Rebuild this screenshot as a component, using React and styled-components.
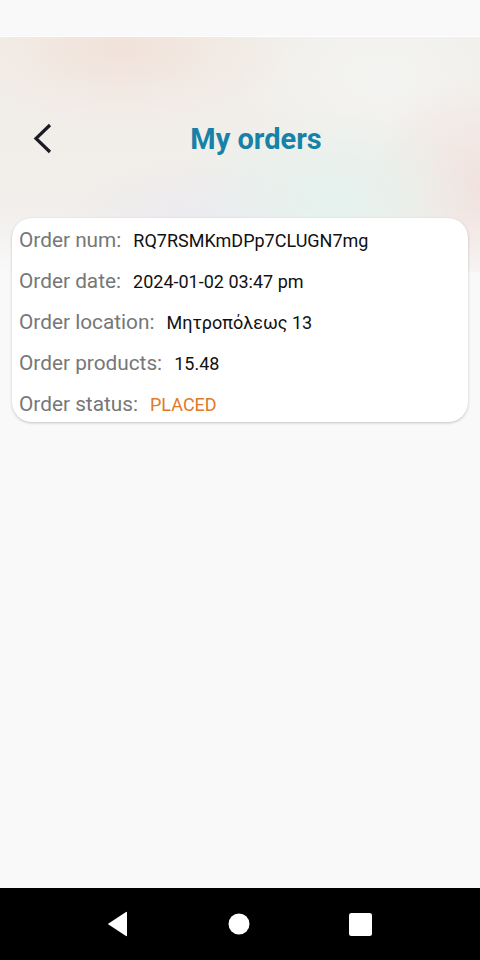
import React from "react";
import styled, { createGlobalStyle } from "styled-components";

const GlobalStyle = createGlobalStyle`
  html, body {
    margin: 0;
    padding: 0;
    background: #f9f9f9;
    font-family: Roboto, "Noto Sans", Arial, sans-serif;
  }
  #root {
    height: 960px;
  }
`;

const order = {
  num: "RQ7RSMKmDPp7CLUGN7mg",
  date: "2024-01-02 03:47 pm",
  location: "Μητροπόλεως 13",
  products: "15.48",
  status: "PLACED",
};

const App = () => {
  return (
    <>
      <GlobalStyle />
      <Screen>
        <StatusBar />
        <Content>
          <TopBar>
            <BackButton aria-label="back">
              <svg width="20" height="32" viewBox="0 0 20 32">
                <polyline
                  points="17,2 3,15.5 17,29"
                  fill="none"
                  stroke="#1b1b25"
                  strokeWidth="3.2"
                />
              </svg>
            </BackButton>
            <Title>My orders</Title>
          </TopBar>

          <Card>
            <Row>
              <Label>Order num:</Label>
              <Value>{order.num}</Value>
            </Row>
            <Row>
              <Label>Order date:</Label>
              <Value>{order.date}</Value>
            </Row>
            <Row>
              <Label>Order location:</Label>
              <Value>{order.location}</Value>
            </Row>
            <Row>
              <Label>Order products:</Label>
              <Value>{order.products}</Value>
            </Row>
            <Row>
              <Label>Order status:</Label>
              <Value status>{order.status}</Value>
            </Row>
          </Card>
        </Content>

        <NavBar>
          <svg width="22" height="26" viewBox="0 0 22 26">
            <path d="M20 1.5 L20 24.5 Q20 25.5 19 25 L1.5 13.5 Q0.8 13 1.5 12.5 L19 1 Q20 0.5 20 1.5 Z" fill="#fff" />
          </svg>
          <svg width="22" height="22" viewBox="0 0 22 22">
            <circle cx="11" cy="11" r="10.5" fill="#fff" />
          </svg>
          <svg width="23" height="23" viewBox="0 0 23 23">
            <rect x="0" y="0" width="23" height="23" rx="2.5" fill="#fff" />
          </svg>
        </NavBar>
      </Screen>
    </>
  );
};

export default App;

const Screen = styled.div`
  width: 480px;
  height: 960px;
  display: flex;
  flex-direction: column;
  background: #f9f9f9;
  overflow: hidden;
`;

const StatusBar = styled.div`
  height: 36px;
  flex-shrink: 0;
  background: #f9f9f9;
  border-bottom: 1px solid #ffffff;
`;

const Content = styled.div`
  flex: 1;
  display: flex;
  flex-direction: column;
  background-color: #f9f9f9;
  background-image:
    radial-gradient(ellipse 170px 80px at 120px 10px, rgba(242, 222, 212, 0.75), transparent),
    radial-gradient(ellipse 150px 90px at 330px 160px, rgba(228, 243, 238, 0.95), transparent),
    radial-gradient(ellipse 110px 110px at 480px 150px, rgba(242, 224, 220, 0.85), transparent),
    radial-gradient(ellipse 150px 70px at 210px 190px, rgba(234, 232, 240, 0.85), transparent),
    radial-gradient(ellipse 140px 90px at 380px 40px, rgba(243, 244, 242, 0.9), transparent),
    linear-gradient(180deg, #f1efea 0%, #f1eeeb 72%, #f9f9f9 100%);
  background-size: 100% 235px;
  background-repeat: no-repeat;
`;

const TopBar = styled.div`
  height: 40px;
  margin: 82px 0 59px;
  padding: 0 32px 0 24px;
  display: flex;
  align-items: center;
`;

const BackButton = styled.button`
  width: 40px;
  height: 40px;
  padding: 0 0 0 9px;
  border: none;
  background: none;
  display: flex;
  align-items: center;
  cursor: pointer;
`;

const Title = styled.h1`
  flex: 1;
  margin: 0;
  text-align: center;
  font-size: 29px;
  font-weight: 700;
  color: #1782a7;
  line-height: 40px;
`;

const Card = styled.div`
  margin: 0 12px;
  padding: 6px 7px 2px;
  background: #ffffff;
  border-radius: 20px;
  box-shadow: 0 1px 3px rgba(0, 0, 0, 0.22);
  display: flex;
  flex-direction: column;
  gap: 9px;
`;

const Row = styled.div`
  height: 32px;
  display: flex;
  align-items: center;
  gap: 12px;
`;

const Label = styled.span`
  font-size: 20.8px;
  color: #777777;
`;

const Value = styled.span`
  font-size: 18px;
  color: ${({ status }) => (status ? "#e07a27" : "#111111")};
`;

const NavBar = styled.div`
  height: 72px;
  flex-shrink: 0;
  background: #000000;
  display: flex;
  align-items: center;
  justify-content: center;
  gap: 99px;
  padding-right: 2px;
`;
